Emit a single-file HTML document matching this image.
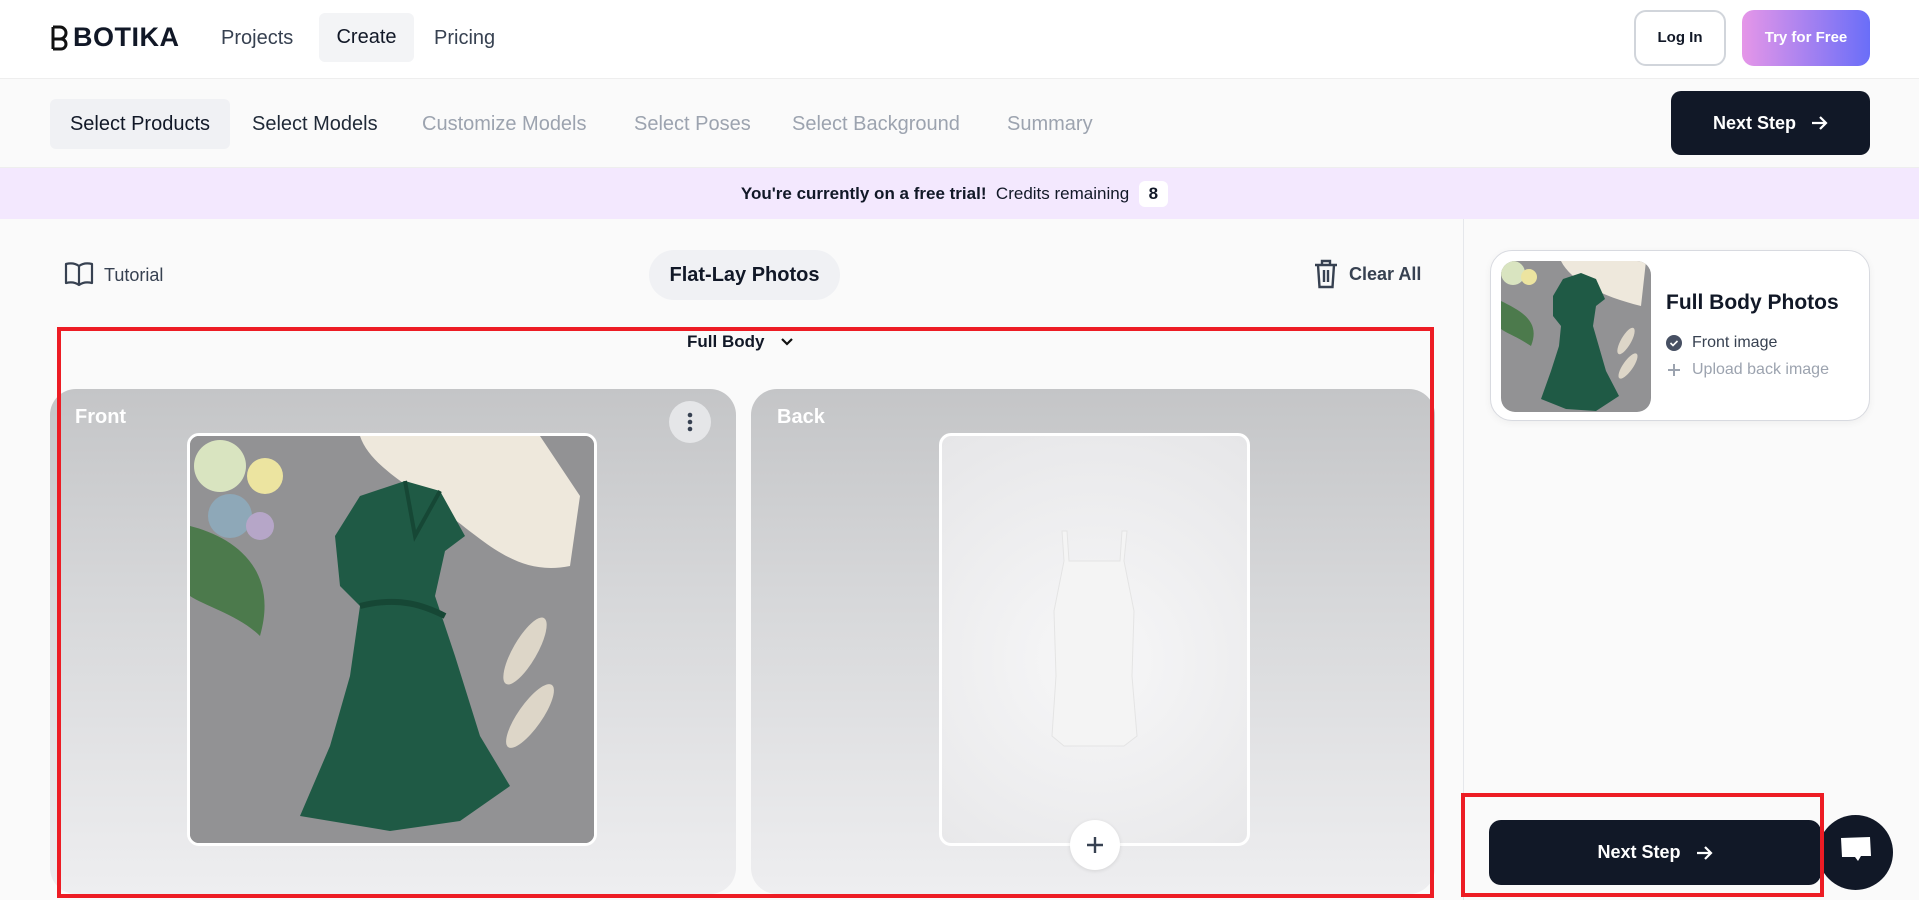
<!DOCTYPE html>
<html><head><meta charset="utf-8"><style>
*{box-sizing:border-box;margin:0;padding:0}
body{width:1919px;height:900px;overflow:hidden;background:#fafafa;font-family:"Liberation Sans",Arial,sans-serif;color:#111827;position:relative}
.abs{position:absolute}
.nav{left:0;top:0;width:1919px;height:79px;background:#fff;border-bottom:1px solid #eee}
.steps{left:0;top:79px;width:1919px;height:89px;background:#fafafa;border-bottom:1px solid #eee}
.step{position:absolute;top:0;height:50px;line-height:50px;font-size:20px;color:#9ca3af}
.btn{background:#111827;color:#fff;font-weight:bold;display:flex;align-items:center;justify-content:center;gap:14px}
.banner{left:0;top:168px;width:1919px;height:51px;background:#f3e8fe;font-size:17px;display:flex;align-items:center;justify-content:center}
.card{border-radius:26px;background:linear-gradient(#c4c5c7,#d6d7d9 40%,#eeeef0 100%);overflow:hidden}
.lbl{color:#fff;font-weight:bold;font-size:20px}
</style></head><body>

<div class="abs nav">
  <div class="abs" style="left:50px;top:22px;font-size:27px;font-weight:bold;letter-spacing:0.5px;display:flex;align-items:center">
    <svg width="20" height="26" viewBox="0 0 20 26" style="margin-right:3px"><path d="M3 2v22M3 2h7a6 6 0 0 1 0 12H3M3 14h8a5 5 0 0 1 0 10H3" fill="none" stroke="#111" stroke-width="3"/></svg>BOTIKA</div>
  <div class="abs" style="left:221px;top:27px;font-size:20px;color:#374151">Projects</div>
  <div class="abs" style="left:319px;top:13px;width:95px;height:49px;background:#f3f4f6;border-radius:6px;font-size:20px;line-height:49px;text-align:center;color:#111827">Create</div>
  <div class="abs" style="left:434px;top:27px;font-size:20px;color:#374151">Pricing</div>
  <div class="abs" style="left:1634px;top:10px;width:92px;height:56px;border:2px solid #d1d5db;border-radius:12px;font-size:15px;font-weight:bold;text-align:center;line-height:52px">Log In</div>
  <div class="abs" style="left:1742px;top:10px;width:128px;height:56px;border-radius:12px;background:linear-gradient(90deg,#e596e8,#6a6ef8);color:#fff;font-size:15px;font-weight:bold;text-align:center;line-height:56px">Try for Free</div>
</div>

<div class="abs steps">
  <div class="step" style="left:50px;top:20px;width:180px;background:#f0f1f4;border-radius:6px;text-align:center;color:#111827">Select Products</div>
  <div class="step" style="left:252px;top:20px;color:#1f2937">Select Models</div>
  <div class="step" style="left:422px;top:20px">Customize Models</div>
  <div class="step" style="left:634px;top:20px">Select Poses</div>
  <div class="step" style="left:792px;top:20px">Select Background</div>
  <div class="step" style="left:1007px;top:20px">Summary</div>
  <div class="abs btn" style="left:1671px;top:12px;width:199px;height:64px;border-radius:10px;font-size:18px">Next Step <svg width="18" height="18" viewBox="0 0 18 18"><path d="M2 9h13M10 3l6 6-6 6" fill="none" stroke="#fff" stroke-width="2.2"/></svg></div>
</div>

<div class="abs banner" style="padding-right:10px"><b>You're currently on a free trial!</b>&nbsp; Credits remaining &nbsp;<span style="background:#fff;border-radius:6px;padding:3px 10px;font-weight:bold">8</span></div>

<div class="abs" style="left:1463px;top:219px;width:1px;height:681px;background:#e5e7eb"></div>

<div class="abs" style="left:64px;top:261px;display:flex;align-items:center;gap:10px;font-size:18px;color:#374151">
<svg width="30" height="28" viewBox="0 0 30 28"><path d="M15 5C11 2 6 2 2 3v19c4-1 9-1 13 2 4-3 9-3 13-2V3c-4-1-9-1-13 2zM15 5v19" fill="none" stroke="#374151" stroke-width="2.2" stroke-linejoin="round"/></svg>Tutorial</div>
<div class="abs" style="left:649px;top:250px;width:191px;height:50px;border-radius:25px;background:#f0f1f4;font-size:20px;font-weight:bold;text-align:center;line-height:50px">Flat-Lay Photos</div>
<div class="abs" style="left:1313px;top:259px;display:flex;align-items:center;gap:10px;font-size:18px;color:#374151;font-weight:bold">
<svg width="26" height="30" viewBox="0 0 26 30"><path d="M2 6h22M9 6V2h8v4M5 6l1.5 22h13L21 6M11 11v12M15 11v12" fill="none" stroke="#374151" stroke-width="2.4"/></svg>Clear All</div>

<div class="abs" style="left:0;top:332px;width:1470px;font-size:17px;font-weight:bold"><span style="position:absolute;left:687px">Full Body</span><svg class="abs" style="left:780px;top:5px" width="14" height="10" viewBox="0 0 14 10"><path d="M2 2l5 5 5-5" fill="none" stroke="#111" stroke-width="2.2"/></svg></div>

<div class="abs card" style="left:50px;top:389px;width:686px;height:505px">
  <div class="abs lbl" style="left:25px;top:17px">Front</div>
  <div class="abs" style="left:619px;top:12px;width:42px;height:42px;border-radius:50%;background:#e5e6e8"><svg width="42" height="42"><circle cx="21" cy="14" r="2.3" fill="#374151"/><circle cx="21" cy="21" r="2.3" fill="#374151"/><circle cx="21" cy="28" r="2.3" fill="#374151"/></svg></div>
  <div class="abs" style="left:137px;top:44px;width:410px;height:413px;border:3px solid #fff;border-radius:12px;overflow:hidden;background:#8c8c8e">
    <svg width="404" height="407" viewBox="0 0 404 407">
      <rect width="404" height="407" fill="#929294"/>
      <path d="M170 0 C180 30 220 50 260 80 C300 110 330 140 380 130 L390 60 L350 0Z" fill="#eee8dc"/>
      <circle cx="30" cy="30" r="26" fill="#d9e4c0"/><circle cx="75" cy="40" r="18" fill="#ece4a0"/><circle cx="40" cy="80" r="22" fill="#8ea8b8"/><circle cx="70" cy="90" r="14" fill="#b6a6c8"/>
      <path d="M0 90 C40 100 90 130 70 200 C50 180 15 170 0 160Z" fill="#4c7a4c"/>
      <path d="M170 60 L215 45 L250 55 L275 100 L255 115 L245 160 L265 220 L290 300 L320 350 L270 385 L200 395 L110 380 L140 310 L160 240 L170 170 L150 150 L145 100Z" fill="#1f5a45"/>
      <path d="M215 45 L225 100 L250 55" fill="none" stroke="#164735" stroke-width="4"/>
      <path d="M170 170 C210 160 235 170 255 180" stroke="#164735" stroke-width="6" fill="none"/>
      <ellipse cx="335" cy="215" rx="12" ry="38" transform="rotate(30 335 215)" fill="#ddd6c8"/>
      <ellipse cx="340" cy="280" rx="12" ry="38" transform="rotate(35 340 280)" fill="#ddd6c8"/>
    </svg>
  </div>
</div>

<div class="abs card" style="left:751px;top:389px;width:684px;height:505px">
  <div class="abs lbl" style="left:26px;top:17px">Back</div>
  <div class="abs" style="left:188px;top:44px;width:311px;height:413px;border:3px solid #fff;border-radius:12px;background:radial-gradient(circle at 50% 55%,#f7f7f8,#e6e6e8)">
    <svg width="305" height="407" viewBox="0 0 305 407"><path d="M120 95 L122 125 L112 175 L114 240 L110 300 L122 310 L182 310 L195 300 L190 240 L192 175 L182 125 L185 95 L180 95 L178 125 L127 125 L125 95Z" fill="#f4f4f4" stroke="#e4e4e4"/></svg>
  </div>
  <div class="abs" style="left:319px;top:431px;width:50px;height:50px;border-radius:50%;background:#fff;box-shadow:0 1px 4px rgba(0,0,0,.1)"><svg width="50" height="50"><path d="M25 17v16M17 25h16" stroke="#374151" stroke-width="2.4"/></svg></div>
</div>

<div class="abs" style="left:57px;top:327px;width:1377px;height:571px;border:4px solid #ed1c24"></div>

<div class="abs" style="left:1490px;top:250px;width:380px;height:171px;background:#fff;border:1px solid #d8dae0;border-radius:22px;box-shadow:0 2px 8px rgba(0,0,0,.05)">
  <div class="abs" style="left:10px;top:10px;width:150px;height:151px;border-radius:14px;overflow:hidden">
    <svg width="150" height="151" viewBox="0 0 150 151"><rect width="150" height="151" fill="#929294"/><path d="M60 0 C70 20 100 35 140 45 L145 0Z" fill="#eee8dc"/><circle cx="12" cy="12" r="12" fill="#d9e4c0"/><circle cx="28" cy="16" r="8" fill="#ece4a0"/><path d="M0 40 C20 50 40 60 30 85 C15 75 5 72 0 68Z" fill="#4c7a4c"/><path d="M62 18 L80 12 L95 18 L104 38 L95 45 L92 65 L105 110 L118 135 L95 150 L65 148 L40 138 L50 110 L58 85 L60 65 L52 55 L52 35Z" fill="#1f5a45"/><ellipse cx="125" cy="80" rx="5" ry="15" transform="rotate(30 125 80)" fill="#ddd6c8"/><ellipse cx="127" cy="105" rx="5" ry="15" transform="rotate(35 127 105)" fill="#ddd6c8"/></svg>
  </div>
  <div class="abs" style="left:175px;top:40px;font-size:21px;font-weight:bold">Full Body Photos</div>
  <div class="abs" style="left:175px;top:83px;font-size:16px;color:#374151;display:flex;align-items:center;gap:10px"><svg width="16" height="16"><circle cx="8" cy="8" r="8" fill="#475063"/><path d="M4.5 8l2.5 2.5 4.5-4.5" fill="none" stroke="#fff" stroke-width="1.6"/></svg>Front image</div>
  <div class="abs" style="left:175px;top:110px;font-size:16px;color:#9ca3af;display:flex;align-items:center;gap:10px"><svg width="16" height="16"><path d="M8 2v12M2 8h12" stroke="#9ca3af" stroke-width="2"/></svg>Upload back image</div>
</div>

<div class="abs" style="left:1818px;top:815px;width:75px;height:75px;border-radius:50%;background:#111827"><svg width="75" height="75"><path d="M23 23 L52 22 L53 41 L43 41 L40 46 L37 42 L24 42Z" fill="#fff"/></svg></div>
<div class="abs btn" style="left:1489px;top:820px;width:332px;height:65px;border-radius:12px;font-size:18px">Next Step <svg width="18" height="18" viewBox="0 0 18 18"><path d="M2 9h13M10 3l6 6-6 6" fill="none" stroke="#fff" stroke-width="2.2"/></svg></div>
<div class="abs" style="left:1461px;top:793px;width:363px;height:104px;border:4px solid #ed1c24"></div>

</body></html>
